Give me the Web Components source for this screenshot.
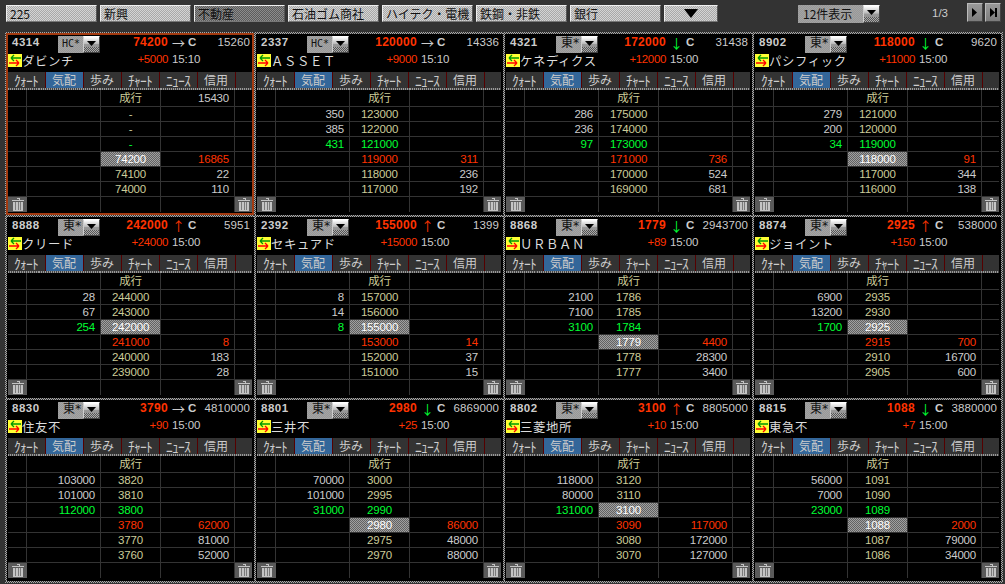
<!DOCTYPE html>
<html lang="ja"><head><meta charset="utf-8"><title>board</title>
<style>
html,body{margin:0;padding:0;background:#333;height:584px;overflow:hidden}
body{font-family:"Liberation Sans","Noto Sans CJK JP",sans-serif}
</style></head><body>
<board-app></board-app>
<script>
const JP='"Noto Sans CJK JP",sans-serif';
const NUM='"Liberation Sans","Noto Sans CJK JP",sans-serif';
const MONO='"DejaVu Sans Mono","Noto Sans CJK JP",monospace';
const check=(a,b)=>`repeating-conic-gradient(${a} 0 25%,${b} 0 50%) 0 0/2px 2px`;
const GREEN='#00ff33',RED='#ff3300';

class ToolButton extends HTMLElement{
  connectedCallback(){
    const s=this.attachShadow({mode:'open'});
    s.innerHTML=`<style>
    :host{display:block;box-sizing:border-box;width:91px;height:17px;border:1px solid;border-color:#eee #555 #777 #eee;
      background:${check('#d4d4d4','#a8a8a8')};color:#111;font:12px/15px ${JP};padding-left:3px;white-space:nowrap}
    :host([on]){background:${check('#8c8c8c','#5c5c5c')};}
    :host([center]){display:flex;align-items:center;justify-content:center;width:54px;padding:0}
    </style><slot></slot>`;
  }
}
customElements.define('tool-button',ToolButton);

class DropSelect extends HTMLElement{
  connectedCallback(){
    const s=this.attachShadow({mode:'open'});
    const w=+this.getAttribute('w')||42, ah=+this.getAttribute('h')||17;
    const small=this.hasAttribute('small');
    const font=w===42?(small?`10px/${ah-2}px ${MONO}`:`12px/${ah-2}px ${MONO}`):`12px/${ah}px ${JP}`;
    s.innerHTML=`<style>
    :host{display:flex;box-sizing:border-box;width:${w}px;height:${ah}px;color:#111;font:${font}}
    .v{flex:1;min-width:0;box-sizing:border-box;background:${check('#a4a4a4','#989898')};padding-left:${small?4:5}px;white-space:nowrap;letter-spacing:${w===42&&!small?'-.5px':'0'}}
    .b{width:17px;flex:none;box-sizing:border-box;border:1px solid;border-color:#fff #444 #444 #ccc;position:relative;
       background:linear-gradient(#fff 0,#bbb 45%,#999 50%,#888 100%);display:flex;align-items:center;justify-content:center}
    .b::after{content:"";position:absolute;left:0;right:0;bottom:0;height:5px;background:${check('#aaa','#555')}}
    svg{position:relative;z-index:1;display:block;margin-top:-3px}
    </style><div class="v"><slot></slot></div><div class="b"><svg width="9" height="5" viewBox="0 0 9 5"><path d="M0 0H9L4.5 5Z" fill="#000"/></svg></div>`;
  }
}
customElements.define('drop-select',DropSelect);

class PageButton extends HTMLElement{
  connectedCallback(){
    const s=this.attachShadow({mode:'open'});
    const end=this.hasAttribute('end');
    s.innerHTML=`<style>
    :host{display:flex;align-items:center;justify-content:center;box-sizing:border-box;width:16px;height:19px;
      background:linear-gradient(#9a9a9a,#7c7c7c);border:1px solid;border-color:#bbb #444 #444 #bbb}
    </style><svg width="8" height="9" viewBox="0 0 8 9"><path d="M1 0L6 4.5L1 9Z" fill="#000"/>${end?'<rect x="6" y="0" width="2" height="9" fill="#000"/>':''}</svg>`;
  }
}
customElements.define('page-button',PageButton);

class TrashButton extends HTMLElement{
  connectedCallback(){
    const s=this.attachShadow({mode:'open'});
    s.innerHTML=`<style>:host{display:flex;align-items:center;justify-content:center;background:#5a5a5a;height:100%}svg{display:block}</style>
    <svg width="12" height="13" viewBox="0 0 12 13" fill="none" stroke="#c4c4c4" stroke-width="1" shape-rendering="crispEdges">
    <path d="M4.5 .5H7.5V1.5"/><path d="M0 2H12V3H0Z" fill="#c4c4c4" stroke="none"/>
    <path d="M1.5 3.5V12.5H10.5V3.5" fill="#c4c4c4"/><path d="M3.5 4V11.5M6 4V11.5M8.5 4V11.5" stroke="#7a7a7a"/></svg>`;
  }
}
customElements.define('trash-button',TrashButton);

class BoardRow extends HTMLElement{
  connectedCallback(){
    const s=this.attachShadow({mode:'open'});
    const a=n=>this.getAttribute(n)||'';
    const tone=a('tone');
    const pc=tone==='cur'?'#fff':tone==='green'?GREEN:tone==='red'?RED:'#cccc99';
    const lc=a('ltone')==='green'?GREEN:'#cccccc';
    const rc=a('rtone')==='red'?RED:'#cccccc';
    s.innerHTML=`<style>
    :host{display:grid;grid-template-columns:19px 74px 60px 74px 17px;height:15px;box-sizing:border-box;border-bottom:1px solid #333;
      font:11.5px/14px ${NUM};letter-spacing:-.2px}
    :host([head]){height:17px}
    :host([head]) div{height:16px;line-height:16px}
    div{box-sizing:border-box;border-right:1px solid #333;white-space:nowrap;height:14px}
    div:last-child{border-right:0}
    .q{text-align:right;padding-right:5px}
    .p{text-align:center;color:${pc}}
    :host([tone=cur]) .p{background:${check('#a0a0a0','#626262')}}
    </style><div></div><div class="q" style="color:${lc}">${a('l')}</div><div class="p">${a('p')}</div><div class="q" style="color:${rc}">${a('r')}</div><div></div>`;
  }
}
customElements.define('board-row',BoardRow);

class TabStrip extends HTMLElement{
  connectedCallback(){
    const s=this.attachShadow({mode:'open'});
    const tabs=['ｸｫｰﾄ','気配','歩み','ﾁｬｰﾄ','ﾆｭｰｽ','信用'];
    s.innerHTML=`<style>
    :host{display:flex;height:18px;box-sizing:border-box;background:#333;border-bottom:2px solid;border-image:repeating-linear-gradient(90deg,#999 0 1px,#444 1px 2px) 2;color:#ccc;font:12px/16px ${JP}}
    .t{box-sizing:border-box;width:38px;text-align:center;border-right:1px solid #500;white-space:nowrap;padding-right:1px}
    .t:first-child{width:36px}
    .t.k{font-size:13.5px;letter-spacing:-.75px}
    .t.a{background:#336699;color:#ccc}
    .e{flex:1}
    </style>${tabs.map((t,i)=>`<div class="t${i==1?' a':''}${/[ｸﾁﾆ]/.test(t)?' k':''}">${t}</div>`).join('')}<div class="e"></div>`;
  }
}
customElements.define('tab-strip',TabStrip);

class StockPanel extends HTMLElement{
  set data(d){this._d=d}
  connectedCallback(){
    const d=this._d;
    const s=this.attachShadow({mode:'open'});
    const arrowColor=d.arrow==='→'?'#cccccc':d.arrow==='↓'?GREEN:RED;
    s.innerHTML=`<style>
    :host{display:block;box-sizing:border-box;width:249px;height:183px;position:relative;
      padding:3px 2px 3px 3px;background:#000;}
    :host::before{content:"";position:absolute;left:0;top:0;width:2px;height:100%;background:${check('#aaa','#333')}}
    :host::after{content:"";position:absolute;left:0;top:0;height:2px;width:100%;background:${check('#aaa','#333')}}
    .sel{position:absolute;left:1px;top:1px;right:0;bottom:0;border:2px solid #a33a10;z-index:2;pointer-events:none}
    .r1,.r2{display:flex;color:#ccc;white-space:nowrap}
    .r1{height:18px;align-items:flex-start;box-sizing:border-box;font:bold 11.5px/15px ${NUM}}
    .r2{height:19px;align-items:flex-start;font:11.5px/13px ${NUM}}
    .code{width:50px;padding-left:4px;box-sizing:border-box;letter-spacing:.5px}
    .r1 drop-select{margin-top:1px}
    .price{width:68px;text-align:right;color:${RED};letter-spacing:.3px;font-size:12px}
    .arr{width:15px;margin-left:4px;text-align:left;font:13px/15px ${JP};color:${arrowColor}}
    .c{width:8px;margin-left:1px}
    .vol{flex:1;text-align:right;padding-right:2px;font-weight:normal;letter-spacing:.1px}
    .ic{width:14px;height:13px;display:block;flex:none;margin-top:1px}
    .name{flex:1;font:12.4px/14px ${JP};color:#ddd;letter-spacing:.6px;margin-top:1px}
    .chg{color:${RED};letter-spacing:-.35px}
    .time{width:80px;margin-left:4px;letter-spacing:-.1px}
    .tbl{display:block}
    .last{display:grid;grid-template-columns:19px 74px 60px 74px 17px;height:15px}
    .last div{border-right:1px solid #333}
    .last>*:last-child{border:0}
    </style>
    ${d.sel?'<div class="sel"></div>':''}
    <div class="r1"><div class="code">${d.code}</div><drop-select${d.mkt==='HC*'?' small':''}>${d.mkt}</drop-select>
      <div class="price">${d.price}</div><div class="arr">${d.arrow}</div><div class="c">C</div><div class="vol">${d.vol}</div></div>
    <div class="r2"><svg class="ic" viewBox="0 0 14 13"><rect width="14" height="13" fill="#ffff33"/>
      <path d="M3 4H13M3 4L6 1M3 4L6 7" stroke="#009900" stroke-width="1.3" fill="none"/>
      <path d="M1 9H11M11 9L8 6M11 9L8 12" stroke="#ff0000" stroke-width="1.3" fill="none"/></svg>
      <div class="name">${d.name}</div><div class="chg">${d.chg}</div><div class="time">${d.time}</div></div>
    <tab-strip></tab-strip>
    <div class="tbl"></div>`;
    const tbl=s.querySelector('.tbl');
    const add=(o)=>{const e=document.createElement('board-row');for(const k in o)if(o[k])e.setAttribute(k,o[k]);tbl.appendChild(e);return e};
    add({head:'1',p:'成行',r:d.mo||''});
    d.rows.forEach(r=>add({l:r[0],p:r[1],r:r[2],tone:r[3],ltone:r[4],rtone:r[5]}));
    const last=document.createElement('div');last.className='last';
    last.innerHTML='<trash-button></trash-button><div></div><div></div><div></div><trash-button></trash-button>';
    tbl.appendChild(last);
  }
}
customElements.define('stock-panel',StockPanel);

function rows(a,b,cur){
  const out=[];
  a.forEach((x,i)=>{const last=i===2;out.push([x[0],x[1],'',last?(cur==='ask'?'cur':'green'):'',last?'green':'','']);});
  b.forEach((x,i)=>{const f=i===0;out.push(['',x[0],x[1],f?(cur==='bid'?'cur':'red'):'','',f?'red':'']);});
  return out;
}
const P=[
 {sel:1,code:'4314',mkt:'HC*',price:'74200',arrow:'→',vol:'15260',name:'ダビンチ',chg:'+5000',time:'15:10',mo:'15430',
  rows:[['','-','','','',''],['','-','','','',''],['','-','','green','',''],['','74200','16865','cur','','red'],['','74100','22'],['','74000','110']]},
 {code:'2337',mkt:'HC*',price:'120000',arrow:'→',vol:'14336',name:'ＡＳＳＥＴ',chg:'+9000',time:'15:10',
  rows:rows([['350','123000'],['385','122000'],['431','121000']],[['119000','311'],['118000','236'],['117000','192']])},
 {code:'4321',mkt:'東*',price:'172000',arrow:'↓',vol:'31438',name:'ケネディクス',chg:'+12000',time:'15:00',
  rows:rows([['286','175000'],['236','174000'],['97','173000']],[['171000','736'],['170000','524'],['169000','681']])},
 {code:'8902',mkt:'東*',price:'118000',arrow:'↓',vol:'9620',name:'パシフィック',chg:'+11000',time:'15:00',
  rows:rows([['279','121000'],['200','120000'],['34','119000']],[['118000','91'],['117000','344'],['116000','138']],'bid')},
 {code:'8888',mkt:'東*',price:'242000',arrow:'↑',vol:'5951',name:'クリード',chg:'+24000',time:'15:00',
  rows:rows([['28','244000'],['67','243000'],['254','242000']],[['241000','8'],['240000','183'],['239000','28']],'ask')},
 {code:'2392',mkt:'東*',price:'155000',arrow:'↑',vol:'1399',name:'セキュアド',chg:'+15000',time:'15:00',
  rows:rows([['8','157000'],['14','156000'],['8','155000']],[['153000','14'],['152000','37'],['151000','15']],'ask')},
 {code:'8868',mkt:'東*',price:'1779',arrow:'↓',vol:'2943700',name:'ＵＲＢＡＮ',chg:'+89',time:'15:00',
  rows:rows([['2100','1786'],['7100','1785'],['3100','1784']],[['1779','4400'],['1778','28300'],['1777','3400']],'bid')},
 {code:'8874',mkt:'東*',price:'2925',arrow:'↑',vol:'538000',name:'ジョイント',chg:'+150',time:'15:00',
  rows:rows([['6900','2935'],['13200','2930'],['1700','2925']],[['2915','700'],['2910','16700'],['2905','600']],'ask')},
 {code:'8830',mkt:'東*',price:'3790',arrow:'→',vol:'4810000',name:'住友不',chg:'+90',time:'15:00',
  rows:rows([['103000','3820'],['101000','3810'],['112000','3800']],[['3780','62000'],['3770','81000'],['3760','52000']])},
 {code:'8801',mkt:'東*',price:'2980',arrow:'↓',vol:'6869000',name:'三井不',chg:'+25',time:'15:00',
  rows:rows([['70000','3000'],['101000','2995'],['31000','2990']],[['2980','86000'],['2975','48000'],['2970','88000']],'bid')},
 {code:'8802',mkt:'東*',price:'3100',arrow:'↑',vol:'8805000',name:'三菱地所',chg:'+10',time:'15:00',
  rows:rows([['118000','3120'],['80000','3110'],['131000','3100']],[['3090','117000'],['3080','172000'],['3070','127000']],'ask')},
 {code:'8815',mkt:'東*',price:'1088',arrow:'↓',vol:'3880000',name:'東急不',chg:'+7',time:'15:00',
  rows:rows([['56000','1091'],['7000','1090'],['23000','1089']],[['1088','2000'],['1087','79000'],['1086','34000']],'bid')},
];

class BoardApp extends HTMLElement{
  connectedCallback(){
    const s=this.attachShadow({mode:'open'});
    s.innerHTML=`<style>
    :host{display:block;width:1005px;height:584px;background:#333;overflow:hidden}
    .top{display:flex;height:32px;box-sizing:border-box;padding:5px 0 0 6px;gap:3px;align-items:flex-start}
    .right{display:flex;align-items:flex-start;margin-left:77px}
    .pg{color:#ccc;font:11.5px/17px ${NUM};width:87px;padding-left:52px;box-sizing:border-box;white-space:nowrap;text-align:left}
    .pb{display:flex;gap:2px;margin-top:-2px}
    .grid{display:grid;grid-template-columns:repeat(4,249px);grid-template-rows:repeat(3,183px);margin-left:5px;width:996px;position:relative}
    .edge-r{position:absolute;left:996px;top:0;width:2px;height:549px;background:${check('#aaa','#333')}}
    .edge-b{position:absolute;left:0;top:549px;width:998px;height:2px;background:${check('#aaa','#333')}}
    </style>
    <div class="top">
      ${['225','新興','不動産','石油ゴム商社','ハイテク・電機','鉄鋼・非鉄','銀行'].map((t,i)=>`<tool-button${i==2?' on':''}>${t}</tool-button>`).join('')}
      <tool-button center><svg width="14" height="9" viewBox="0 0 14 9"><path d="M0 0H14L7 9Z" fill="#000"/></svg></tool-button>
      <div class="right"><drop-select w="82" h="18">12件表示</drop-select><div class="pg">1/3</div>
      <div class="pb"><page-button></page-button><page-button end></page-button></div></div>
    </div>
    <div class="grid"><div class="edge-r"></div><div class="edge-b"></div></div>`;
    const g=s.querySelector('.grid');
    P.forEach(d=>{const e=document.createElement('stock-panel');e.data=d;g.appendChild(e)});
  }
}
customElements.define('board-app',BoardApp);
</script>
</body></html>
